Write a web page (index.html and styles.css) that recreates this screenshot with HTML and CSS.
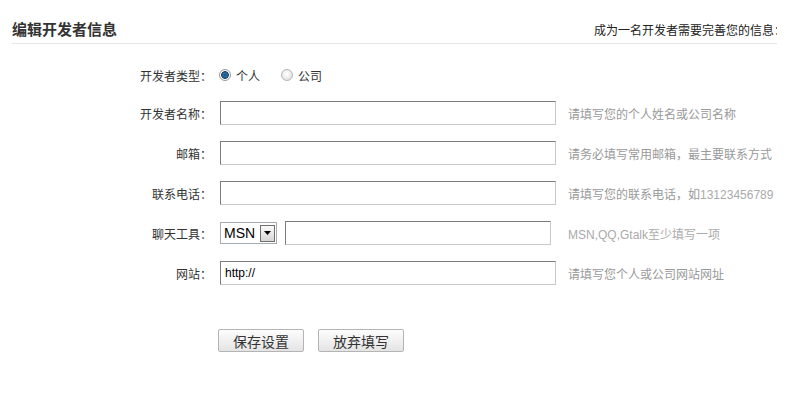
FILE: index.html
```html
<!DOCTYPE html>
<html lang="zh-CN">

<head>
    <meta charset="UTF-8">
    <title>编辑开发者信息</title>
    <link rel="stylesheet" href="styles.css">
</head>

<body>
    <div class="header">
        <h1>编辑开发者信息</h1>
        <span class="header-tip">成为一名开发者需要完善您的信息：</span>
    </div>

    <form class="dev-form">
        <div class="row radio-row">
            <label class="label">开发者类型：</label>
            <div class="field">
                <label class="radio"><input type="radio" name="type" checked> 个人</label>
                <label class="radio"><input type="radio" name="type"> 公司</label>
            </div>
        </div>
        <div class="row">
            <label class="label">开发者名称：</label>
            <div class="field"><input class="text" type="text"></div>
            <span class="hint">请填写您的个人姓名或公司名称</span>
        </div>
        <div class="row">
            <label class="label">邮箱：</label>
            <div class="field"><input class="text" type="text"></div>
            <span class="hint">请务必填写常用邮箱，最主要联系方式</span>
        </div>
        <div class="row">
            <label class="label">联系电话：</label>
            <div class="field"><input class="text" type="text"></div>
            <span class="hint">请填写您的联系电话，如<span class="num">13123456789</span></span>
        </div>
        <div class="row">
            <label class="label">聊天工具：</label>
            <div class="field chat">
                <div class="select">
                    <span class="select-value">MSN</span>
                    <span class="select-btn">
                        <svg width="7" height="4" viewBox="0 0 7 4"><path d="M0 0h7L3.5 4z" fill="#000"/></svg>
                    </span>
                </div>
                <input class="text chat-input" type="text">
            </div>
            <span class="hint num">MSN,QQ,Gtalk<span class="cjk">至少填写一项</span></span>
        </div>
        <div class="row">
            <label class="label">网站：</label>
            <div class="field"><input class="text" type="text" value="http://"></div>
            <span class="hint">请填写您个人或公司网站网址</span>
        </div>

        <div class="actions">
            <button type="button" class="btn">保存设置</button>
            <button type="button" class="btn">放弃填写</button>
        </div>
    </form>
</body>

</html>
```

FILE: styles.css
```css
body {
    margin: 0;
    font-family: "Liberation Sans", "Noto Sans CJK SC", sans-serif;
    font-size: 12px;
    color: #333;
    background: #fff;
}

.header {
    width: 765px;
    margin-left: 12px;
    padding: 18px 0 3px;
    display: flex;
    justify-content: space-between;
    align-items: center;
    border-bottom: 1px solid #e6e6e6;
    overflow: hidden;
}

.header h1 {
    margin: 0;
    font-family: "Noto Sans CJK SC", sans-serif;
    font-size: 15px;
    line-height: 20px;
    font-weight: bold;
    color: #333;
}

.header-tip {
    font-family: "Noto Sans CJK SC", sans-serif;
    font-size: 12px;
    line-height: 20px;
    color: #222;
    margin-right: -9px;
    padding-top: 2px;
    white-space: nowrap;
}

.dev-form {
    padding-top: 21px;
}

.row {
    display: grid;
    grid-template-columns: 212px 336px auto;
    column-gap: 8px;
    align-items: center;
    height: 24px;
    margin-bottom: 16px;
}

.radio-row {
    height: 20px;
}

.label {
    font-family: "Noto Sans CJK SC", sans-serif;
    text-align: right;
    color: #333;
}

.field {
    display: flex;
    align-items: center;
}

.radio {
    display: flex;
    align-items: center;
    gap: 5px;
    margin-right: 22px;
    font-family: "Noto Sans CJK SC", sans-serif;
    color: #333;
}

.radio input {
    appearance: none;
    width: 12px;
    height: 12px;
    margin: 0 0 0 -1px;
    border-radius: 50%;
    border: 1px solid #b5b5b5;
    background: radial-gradient(circle at 45% 40%, #fff 0, #f1f1f1 40%, #d8d8d8 100%);
}

.radio input:checked {
    border-color: #9a9a9a;
    background: radial-gradient(circle, #1b4f7a 0, #2b6ea3 2px, #16466e 3.5px, #fff 4.2px, #e5e5e5 100%);
}

.text {
    box-sizing: border-box;
    width: 336px;
    height: 24px;
    margin: 0;
    padding: 0 4px;
    border: 1px solid;
    border-color: #7c7c7c #c8c8c8 #c8c8c8 #7c7c7c;
    font-family: "Liberation Sans", sans-serif;
    font-size: 12px;
    color: #000;
    outline: none;
}

.chat {
    gap: 8px;
}

.chat-input {
    width: 266px;
}

.select {
    box-sizing: border-box;
    width: 57px;
    height: 22px;
    display: flex;
    align-items: center;
    justify-content: space-between;
    padding: 0 1px 0 3px;
    border: 1px solid #a5acb2;
    background: #fff;
}

.select-value {
    font-family: "Liberation Sans", sans-serif;
    font-size: 14px;
    color: #000;
}

.select-btn {
    box-sizing: border-box;
    width: 15px;
    height: 17px;
    display: flex;
    align-items: center;
    justify-content: center;
    border: 1px solid #6f6f6f;
    background: linear-gradient(#fafafa, #d6d6d6);
}

.hint {
    font-family: "Noto Sans CJK SC", sans-serif;
    color: #999;
    padding-left: 4px;
    white-space: nowrap;
}

.hint.num {
    font-family: "Liberation Sans", sans-serif;
    color: #aaa;
    padding-left: 4px;
}

.num {
    font-family: "Liberation Sans", sans-serif;
    color: #aaa;
}

.cjk {
    font-family: "Noto Sans CJK SC", sans-serif;
}

.actions {
    display: flex;
    gap: 14px;
    margin: 44px 0 0 218px;
}

.btn {
    width: 86px;
    height: 23px;
    padding: 0;
    border: 1px solid #b4b4b4;
    border-radius: 2px;
    background: linear-gradient(#fdfdfd, #e4e4e4);
    font-family: "Noto Sans CJK SC", sans-serif;
    font-size: 14px;
    color: #333;
    cursor: pointer;
}
```
